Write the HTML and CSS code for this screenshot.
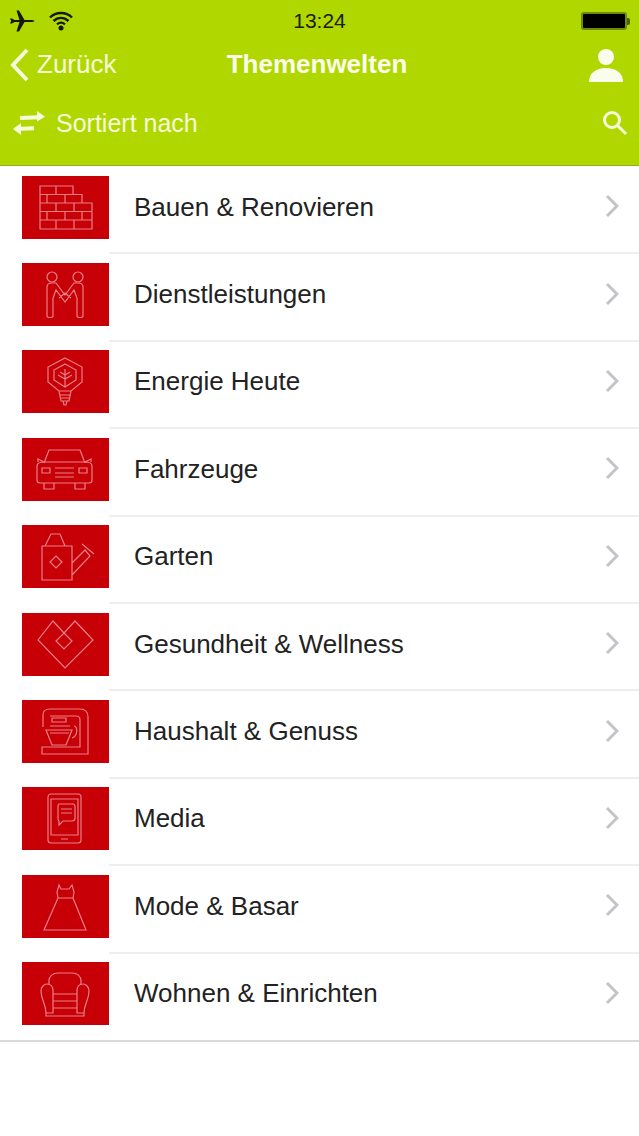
FILE: index.html
```html
<!DOCTYPE html>
<html>
<head>
  <title>Themenwelten</title>
  <link rel="stylesheet" href="styles.css">
</head>
<body>
  <div class="header">
    <div class="status-bar">
      <div class="status-left">
        <svg class="plane" viewBox="0 0 26 24"><path d="M1 9.5 L3 9.5 L5.5 11 L10.5 11 L7.5 1.5 L10 1.5 L15.5 11 L21 11 C24 11 25.5 11.500 25.500 12 C25.500 12.500 24 13 21 13 L15.500 13 L10 22.500 L7.500 22.500 L10.500 13 L5.500 13 L3 14.500 L1 14.500 L2.200 12 Z"/></svg>
        <svg class="wifi" viewBox="0 0 24 20"><path d="M1 6.500 C7 0.500 17 0.500 23 6.500 M4.500 10 C9 5.800 15 5.800 19.500 10 M8 13.300 C10.500 11.200 13.500 11.200 16 13.300" /><circle cx="12" cy="17" r="2.500"/></svg>
      </div>
      <div class="clock">13:24</div>
      <div class="battery"><div class="battery-fill"></div><div class="battery-tip"></div></div>
    </div>
    <div class="nav-bar">
      <div class="back">
        <svg class="back-arrow" viewBox="0 0 20 34"><path d="M17 2 L3 17 L17 32"/></svg>
        <span>Zurück</span>
      </div>
      <div class="title">Themenwelten</div>
      <div class="nav-right">
        <svg class="user" viewBox="0 0 36 34"><circle cx="18" cy="9" r="8"/><path d="M1 34 C1 25 8 20 18 20 C28 20 35 25 35 34 Z"/></svg>
      </div>
    </div>
    <div class="sort-bar">
      <svg class="swap" viewBox="0 0 34 26"><path d="M8 8 L27 7.200 M3 19 L22 18.200"/><path class="solid" d="M25 1 L33 6.800 L25 11.500 Z M9 13 L1 19 L9 25 Z"/></svg>
      <span class="sort-label">Sortiert nach</span>
      <svg class="search" viewBox="0 0 26 26"><circle cx="10" cy="10" r="7.500"/><path d="M15.500 15.500 L24 24"/></svg>
    </div>
  </div>

  <div class="list">
    <div class="row">
      <div class="tile">
        <svg viewBox="0 0 87 63"><path d="M18 10 H51 V18.500 H18 Z M18 18.500 H60 V27 H18 Z M18 27 H70 V35.500 H18 Z M18 35.500 H70 V44 H18 Z M18 44 H70 V53 H18 Z M34 10 V18.500 M25 18.500 V27 M43 18.500 V27 M34 27 V35.500 M52 27 V35.500 M25 35.500 V44 M43 35.500 V44 M60 35.500 V44 M34 44 V53 M52 44 V53"/></svg>
      </div>
      <div class="label">Bauen &amp; Renovieren</div>
      <svg class="chevron" viewBox="0 0 14 24"><path d="M2 2 L12 12 L2 22"/></svg>
    </div>
    <div class="row">
      <div class="tile">
        <svg viewBox="0 0 87 63"><circle cx="30" cy="14" r="5"/><circle cx="56" cy="14" r="5"/><path d="M25 24 C25 21 27 20 30 20 L34 20 L43 32 L52 20 L56 20 C59 20 61 21 61 24 V53 C61 55 55 55 55 53 V35 L52 27 L43 39 L34 27 L31 35 V53 C31 55 25 55 25 53 Z M37 35 L43 30 L49 35"/></svg>
      </div>
      <div class="label">Dienstleistungen</div>
      <svg class="chevron" viewBox="0 0 14 24"><path d="M2 2 L12 12 L2 22"/></svg>
    </div>
    <div class="row">
      <div class="tile">
        <svg viewBox="0 0 87 63"><path d="M43 8 L60 17 V32 L49 41 H37 L26 32 V17 Z M43 14 L54 20 V30 L43 37 L32 30 V20 Z M43 19 V37 M36 25 L43 29 L50 25 M38 22 L43 25 L48 22 M37 41 L39 51 H47 L49 41 M38 45 H48 M39 48 H47 M41 51 L42 55 H44 L45 51"/></svg>
      </div>
      <div class="label">Energie Heute</div>
      <svg class="chevron" viewBox="0 0 14 24"><path d="M2 2 L12 12 L2 22"/></svg>
    </div>
    <div class="row">
      <div class="tile">
        <svg viewBox="0 0 87 63"><path d="M22 25 L27 12 H58 L63 25 M15 28 C15 25 17 24 22 24 H63 C68 24 70 25 70 28 V42 C70 44 69 45 67 45 H18 C16 45 15 44 15 42 Z M22 24 L16 21 V24 M63 24 L69 21 V24 M20 30 H28 V35 H20 Z M57 30 H65 V35 H57 Z M33 30 H52 M33 35 H52 M33 39 H52 M22 45 V51 H32 V45 M53 45 V51 H63 V45"/></svg>
      </div>
      <div class="label">Fahrzeuge</div>
      <svg class="chevron" viewBox="0 0 14 24"><path d="M2 2 L12 12 L2 22"/></svg>
    </div>
    <div class="row">
      <div class="tile">
        <svg viewBox="0 0 87 63"><path d="M20 21 H50 V55 H20 Z M23 21 L29 9 H38 L43 21 M50 38 L63 25 L68 31 L50 50 M60 19 L72 29 M34 31 L40 37 L34 43 L28 37 Z"/></svg>
      </div>
      <div class="label">Garten</div>
      <svg class="chevron" viewBox="0 0 14 24"><path d="M2 2 L12 12 L2 22"/></svg>
    </div>
    <div class="row">
      <div class="tile">
        <svg viewBox="0 0 87 63"><path d="M16 27 L31 8 L42 20 L53 8 L71 27 L43 55 Z M42 20 L50 28 L42 36 L34 28 Z"/></svg>
      </div>
      <div class="label">Gesundheit &amp; Wellness</div>
      <svg class="chevron" viewBox="0 0 14 24"><path d="M2 2 L12 12 L2 22"/></svg>
    </div>
    <div class="row">
      <div class="tile">
        <svg viewBox="0 0 87 63"><path d="M21 27 V15 C21 11 24 9 28 9 H58 C63 9 66 12 66 17 V54 H20 V47 H58 V20 C58 17 56 16 54 16 H28 M30 18 H44 V22 H30 Z M28 26 H48 M24 30 H50 L44 45 H30 Z M28 33 H47 M52 26 C56 26 56 36 50 38"/></svg>
      </div>
      <div class="label">Haushalt &amp; Genuss</div>
      <svg class="chevron" viewBox="0 0 14 24"><path d="M2 2 L12 12 L2 22"/></svg>
    </div>
    <div class="row">
      <div class="tile">
        <svg viewBox="0 0 87 63"><rect x="26" y="7" width="33" height="49" rx="3"/><path d="M29 12 H56 V48 H29 Z M39 52 H46 M37 17 H51 C53 17 53 18 53 20 V31 C53 33 52 34 50 34 H41 L37 38 V34 C36 34 36 33 36 31 V20 C36 18 36 17 37 17 Z M39 22 H50 M39 26 H50"/></svg>
      </div>
      <div class="label">Media</div>
      <svg class="chevron" viewBox="0 0 14 24"><path d="M2 2 L12 12 L2 22"/></svg>
    </div>
    <div class="row">
      <div class="tile">
        <svg viewBox="0 0 87 63"><path d="M37 10 L39 14 H47 L50 10 L52 17 L51 23 H36 L35 17 Z M36 23 L22 55 H64 L51 23"/></svg>
      </div>
      <div class="label">Mode &amp; Basar</div>
      <svg class="chevron" viewBox="0 0 14 24"><path d="M2 2 L12 12 L2 22"/></svg>
    </div>
    <div class="row">
      <div class="tile">
        <svg viewBox="0 0 87 63"><path d="M27 22 V19 C27 14 31 11 36 11 H50 C55 11 59 14 59 19 V22 M19 29 C19 25 22 22 25 22 C29 22 31 25 31 29 V51 H24 C24 42 19 38 19 29 Z M67 29 C67 25 64 22 61 22 C57 22 55 25 55 29 V51 H62 C62 42 67 38 67 29 Z M31 32 H55 M31 39 H55 M31 46 H55 M24 51 V54 H62 V51"/></svg>
      </div>
      <div class="label">Wohnen &amp; Einrichten</div>
      <svg class="chevron" viewBox="0 0 14 24"><path d="M2 2 L12 12 L2 22"/></svg>
    </div>
  </div>
</body>
</html>
```

FILE: styles.css
```css
/* Page */
body {
  margin: 0;
  height: 1136px;
  overflow: hidden;
  background: #fff;
  font-family: "Liberation Sans", Arial, sans-serif;
}

/* Green header */
.header {
  height: 166px;
  box-sizing: border-box;
  background: #b0d800;
  border-bottom: 1px solid #96ab1c;
  color: #f6fbdc;
}

.status-bar {
  height: 42px;
  padding: 0 9px;
  display: grid;
  grid-template-columns: 1fr auto 1fr;
  align-items: center;
  color: #1a2000;
}

.status-left {
  display: flex;
  align-items: center;
  gap: 14px;
}

.plane {
  width: 26px;
  height: 24px;
  fill: #141a00;
}

.wifi {
  width: 24px;
  height: 20px;
  fill: #141a00;
}

.wifi path {
  fill: none;
  stroke: #141a00;
  stroke-width: 2.4;
}

.clock {
  font-size: 21px;
}

.battery {
  justify-self: end;
  display: flex;
  align-items: center;
}

.battery-fill {
  width: 42px;
  height: 14px;
  background: #000;
  border: 2px solid #6f8a08;
  border-radius: 3px;
}

.battery-tip {
  width: 3px;
  height: 7px;
  background: #4d5f08;
  border-radius: 0 2px 2px 0;
}

.nav-bar {
  height: 45px;
  padding: 0 15px 0 10px;
  display: grid;
  grid-template-columns: 1fr auto 1fr;
  align-items: center;
}

.back {
  display: flex;
  align-items: center;
  gap: 7px;
  font-size: 26px;
}

.back-arrow {
  width: 20px;
  height: 34px;
  fill: none;
  stroke: #f6fbdc;
  stroke-width: 4;
}

.title {
  font-size: 26px;
  font-weight: bold;
  color: #fbfdec;
}

.nav-right {
  display: flex;
  justify-content: flex-end;
}

.user {
  width: 36px;
  height: 34px;
  fill: #fbfdec;
}

.sort-bar {
  height: 72px;
  padding: 0 11px 0 12px;
  display: flex;
  align-items: center;
}

.swap {
  width: 34px;
  height: 26px;
  fill: none;
  stroke: #f6fbdc;
  stroke-width: 4;
}

.swap .solid {
  fill: #f6fbdc;
  stroke: none;
}

.sort-label {
  margin-left: 10px;
  flex: 1;
  font-size: 25px;
}

.search {
  width: 26px;
  height: 26px;
  fill: none;
  stroke: #f6fbdc;
  stroke-width: 3;
}

/* Theme list */
.list {
  border-bottom: 2px solid #d9d9d9;
}

.row {
  height: 87.4px;
  box-sizing: border-box;
  padding: 0 20px 1px 22px;
  display: flex;
  align-items: center;
  position: relative;
}

.row + .row::before {
  content: "";
  position: absolute;
  left: 109px;
  right: 0;
  top: -1px;
  height: 2px;
  background: #eeeeee;
}

.tile {
  width: 87px;
  height: 63px;
  margin-top: -4px;
  flex: none;
  background: #c70007;
}

.tile svg {
  display: block;
  width: 87px;
  height: 63px;
  fill: none;
  stroke: #ea7f86;
  stroke-width: 1.2;
}

.label {
  flex: 1;
  margin-left: 25px;
  margin-top: -4px;
  font-size: 26px;
  color: #222;
}

.chevron {
  width: 14px;
  height: 24px;
  margin-top: -6px;
  fill: none;
  stroke: #c4c4c8;
  stroke-width: 3;
}
```
